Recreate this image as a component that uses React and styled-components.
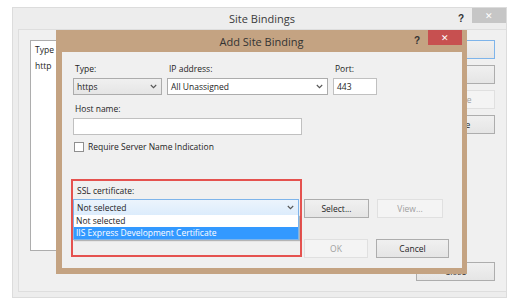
import React from 'react'
import styled, { createGlobalStyle } from 'styled-components'

const GlobalStyle = createGlobalStyle`
  html, body {
    margin: 0;
    padding: 0;
    background: #ffffff;
  }
  body {
    font-family: "Open Sans", "Noto Sans", sans-serif;
    font-size: 8.5px;
    color: #1e1e1e;
  }
`

const Page = styled.div`
  position: relative;
  width: 518px;
  height: 307px;
  padding: 7px 0 0 12px;
  box-sizing: border-box;
`

const OuterWindow = styled.div`
  width: 495px;
  height: 291px;
  box-sizing: border-box;
  background: #ededed;
  border: 1px solid #dcdcdc;
  display: flex;
  flex-direction: column;
`

const OuterTitleBar = styled.div`
  height: 21px;
  display: flex;
  align-items: center;
`

const Title = styled.div`
  flex: 1;
  text-align: center;
  font-size: 11px;
  color: #3a3a3a;
  padding-left: ${p => p.$offset || 0}px;
`

const Help = styled.div`
  font-family: "Liberation Sans", sans-serif;
  font-weight: bold;
  font-size: 10px;
  color: #333;
  width: 10px;
  margin-right: 4px;
`

const CloseBtn = styled.div`
  width: 34px;
  height: 15px;
  align-self: flex-start;
  display: flex;
  align-items: center;
  justify-content: center;
  background: ${p => (p.$active ? '#c75050' : '#c6c6c6')};
  color: #fff;
  font-family: "Liberation Sans", sans-serif;
  font-size: 9px;
`

const OuterBody = styled.div`
  flex: 1;
  margin: 0 0 5px 5px;
  border: 1px solid #dedede;
  border-right: none;
  background: #f0f0f0;
  display: flex;
  padding: 10px 11px 0 11px;
  gap: 10px;
`

const ListBox = styled.div`
  width: 200px;
  height: 211px;
  box-sizing: border-box;
  background: #fff;
  border: 1px solid #adadad;
  display: flex;
  flex-direction: column;
`

const ListHead = styled.div`
  padding: 3px 4px;
  font-size: 8.5px;
`

const ListCell = styled.div`
  padding: 2px 4px;
  font-size: 8.5px;
`

const SideButtons = styled.div`
  margin-left: auto;
  width: 79px;
  display: flex;
  flex-direction: column;
  gap: 6px;
`

const WinButton = styled.div`
  height: 19px;
  box-sizing: border-box;
  border: 1px solid ${p => (p.$focus ? '#7eb4ea' : p.$disabled ? '#e0e0e0' : '#adadad')};
  background: ${p => (p.$disabled ? '#f4f4f4' : 'linear-gradient(#f0f0f0, #e5e5e5)')};
  color: ${p => (p.$disabled ? '#a0a0a0' : '#1e1e1e')};
  display: flex;
  align-items: center;
  justify-content: center;
  font-size: 8.5px;
  width: ${p => (p.$w ? p.$w + 'px' : 'auto')};
  margin-top: ${p => p.$mt || 0}px;
`

const Dialog = styled.div`
  position: absolute;
  left: 56px;
  top: 30px;
  width: 411px;
  height: 244px;
  box-sizing: border-box;
  background: #c4a382;
  padding: 0 5px 6px 6px;
  display: flex;
  flex-direction: column;
`

const DialogTitleBar = styled.div`
  height: 22px;
  display: flex;
  align-items: flex-start;
`

const DialogTitle = styled(Title)`
  padding-top: 4px;
  color: #333;
`

const DialogHelp = styled(Help)`
  margin-top: 5px;
`

const DialogBody = styled.div`
  flex: 1;
  background: #f0f0f0;
  padding: 11px 0 0 11px;
  display: flex;
  flex-direction: column;
`

const FieldRow = styled.div`
  display: flex;
  gap: 5px;
  align-items: flex-end;
  margin-top: ${p => p.$mt || 0}px;
`

const Field = styled.div`
  display: flex;
  flex-direction: column;
  gap: 3px;
  width: ${p => p.$w}px;
`

const Label = styled.div`
  font-size: 8.5px;
  color: #1e1e1e;
  padding-left: 2px;
  line-height: 12px;
`

const Select = styled.div`
  height: 17px;
  box-sizing: border-box;
  border: 1px solid ${p => (p.$focus ? '#7eb4ea' : '#acacac')};
  background: ${p =>
    p.$focus ? 'linear-gradient(#ecf4fc, #dcecfc)' : p.$white ? '#fff' : 'linear-gradient(#f0f0f0, #e5e5e5)'};
  display: flex;
  align-items: center;
  padding: 0 4px 0 3px;
  font-size: 8.5px;
  color: #1e1e1e;
`

const SelectText = styled.span`
  flex: 1;
`

const Chevron = styled.svg`
  width: 7px;
  height: 5px;
`

const TextInput = styled.div`
  height: 17px;
  box-sizing: border-box;
  border: 1px solid #c0c0c0;
  background: #fff;
  display: flex;
  align-items: center;
  padding: 0 3px;
  font-size: 8.5px;
`

const CheckRow = styled.div`
  display: flex;
  align-items: center;
  gap: 4px;
  margin-top: 6px;
  padding-left: 1px;
`

const CheckBox = styled.div`
  width: 10px;
  height: 10px;
  box-sizing: border-box;
  border: 1px solid #8f8f8f;
  background: #fff;
`

const BottomRow = styled.div`
  display: flex;
  margin-top: 27px;
  margin-left: -2px;
  gap: 2px;
`

const Highlight = styled.div`
  position: relative;
  width: 231px;
  height: 78px;
  box-sizing: border-box;
  border: 2px solid #e5524f;
  padding: 4px 2px 0 0;
`

const SslLabel = styled(Label)`
  padding-left: 4px;
  margin-bottom: 2px;
`

const SelectWrap = styled.div`
  position: relative;
  width: 226px;
`

const DropList = styled.div`
  position: absolute;
  left: 0;
  right: 0;
  top: 16px;
  background: #fff;
  border: 1px solid #7eb4ea;
  border-top: none;
  box-shadow: 1px 1px 1px rgba(0, 0, 0, 0.25);
`

const Option = styled.div`
  height: 12px;
  line-height: 12px;
  padding-left: 2px;
  font-size: 8.5px;
  background: ${p => (p.$selected ? '#3399ff' : '#fff')};
  color: ${p => (p.$selected ? '#fff' : '#1e1e1e')};
`

const ButtonColumn = styled.div`
  display: flex;
  flex-direction: column;
  gap: 21px;
  padding-top: 20px;
`

const ButtonRow = styled.div`
  display: flex;
  gap: 8px;
`

const ChevronIcon = () => (
  <Chevron viewBox="0 0 7 5">
    <path d="M0.8 1 L3.5 3.7 L6.2 1" fill="none" stroke="#555" strokeWidth="1.1" />
  </Chevron>
)

const App = () => {
  return (
    <>
      <GlobalStyle />
      <Page>
        <OuterWindow>
          <OuterTitleBar>
            <Title $offset={53}>Site Bindings</Title>
            <Help>?</Help>
            <CloseBtn>✕</CloseBtn>
          </OuterTitleBar>
          <OuterBody>
            <ListBox>
              <ListHead>Type</ListHead>
              <ListCell>http</ListCell>
            </ListBox>
            <SideButtons>
              <WinButton $focus>Add...</WinButton>
              <WinButton>Edit...</WinButton>
              <WinButton $disabled>Remove</WinButton>
              <WinButton>Browse</WinButton>
              <WinButton $mt={122}>Close</WinButton>
            </SideButtons>
          </OuterBody>
        </OuterWindow>

        <Dialog>
          <DialogTitleBar>
            <DialogTitle $offset={47}>Add Site Binding</DialogTitle>
            <DialogHelp>?</DialogHelp>
            <CloseBtn $active>✕</CloseBtn>
          </DialogTitleBar>
          <DialogBody>
            <FieldRow>
              <Field $w={89}>
                <Label>Type:</Label>
                <Select>
                  <SelectText>https</SelectText>
                  <ChevronIcon />
                </Select>
              </Field>
              <Field $w={161}>
                <Label>IP address:</Label>
                <Select $white>
                  <SelectText>All Unassigned</SelectText>
                  <ChevronIcon />
                </Select>
              </Field>
              <Field $w={44}>
                <Label>Port:</Label>
                <TextInput>443</TextInput>
              </Field>
            </FieldRow>
            <FieldRow $mt={8}>
              <Field $w={229}>
                <Label>Host name:</Label>
                <TextInput />
              </Field>
            </FieldRow>
            <CheckRow>
              <CheckBox />
              <span>Require Server Name Indication</span>
            </CheckRow>
            <BottomRow>
              <Highlight>
                <SslLabel>SSL certificate:</SslLabel>
                <SelectWrap>
                  <Select $focus>
                    <SelectText>Not selected</SelectText>
                    <ChevronIcon />
                  </Select>
                  <DropList>
                    <Option>Not selected</Option>
                    <Option $selected>IIS Express Development Certificate</Option>
                  </DropList>
                </SelectWrap>
              </Highlight>
              <ButtonColumn>
                <ButtonRow>
                  <WinButton $w={65}>Select...</WinButton>
                  <WinButton $w={66} $disabled>View...</WinButton>
                </ButtonRow>
                <ButtonRow>
                  <WinButton $w={64} $disabled>OK</WinButton>
                  <WinButton $w={73}>Cancel</WinButton>
                </ButtonRow>
              </ButtonColumn>
            </BottomRow>
          </DialogBody>
        </Dialog>
      </Page>
    </>
  )
}

export default App
